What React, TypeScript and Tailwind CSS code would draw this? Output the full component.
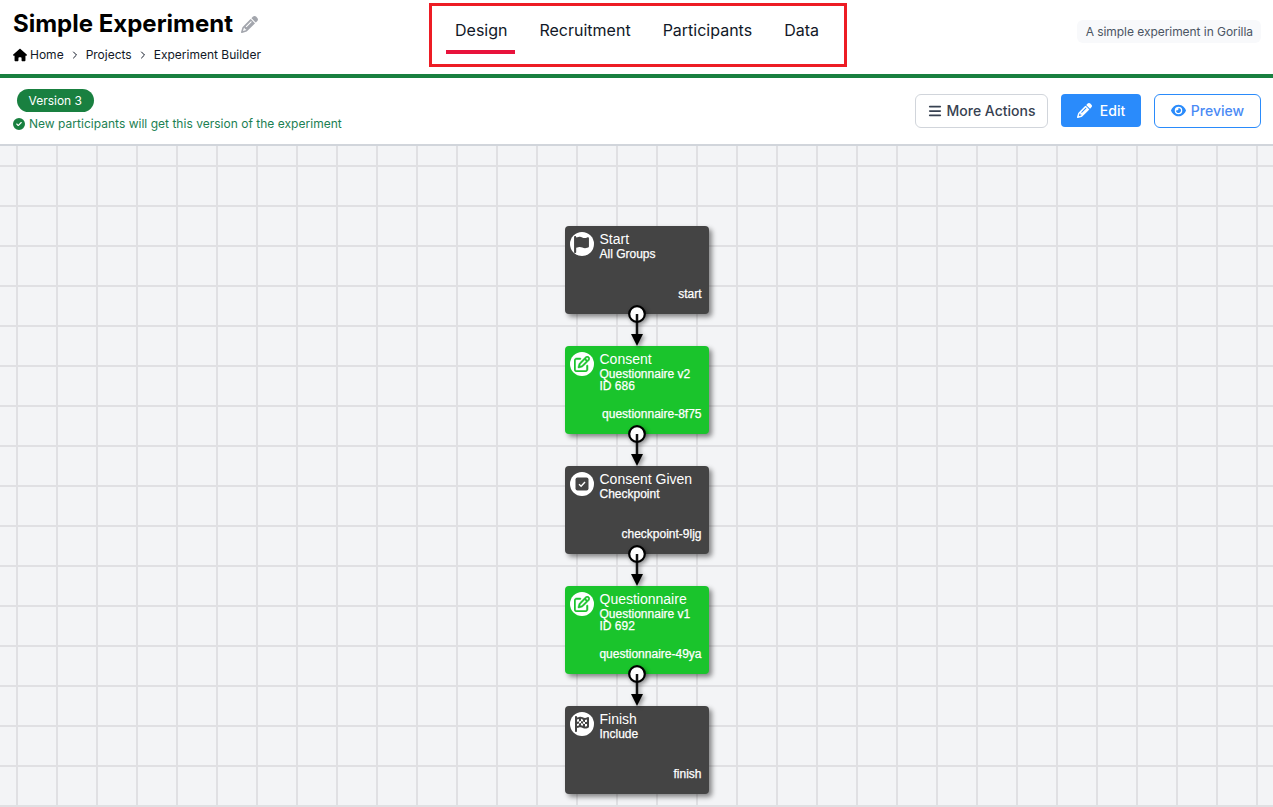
import { ChevronRight } from "lucide-react";
import { FaHouse, FaPencil, FaCircleCheck, FaEye, FaFlag, FaRegPenToSquare, FaFlagCheckered, FaBars } from "react-icons/fa6";

function CheckBox() {
  return (
    <svg width="14" height="14" viewBox="0 0 14 14">
      <rect x="0.5" y="0.5" width="13" height="13" rx="2" fill="#444444" />
      <path d="M4 7.2L6.1 9.2L10 5" fill="none" stroke="#fff" strokeWidth="1.4" />
    </svg>
  );
}

function EditIcon() {
  return <FaRegPenToSquare stroke="currentColor" strokeWidth="16" className="text-[16px]" />;
}

function FlagIcon() {
  return <FaFlag className="text-[17px]" />;
}

function FinishIcon() {
  return <FaFlagCheckered className="text-[16px]" />;
}

const nodes = [
  { title: "Start", lines: ["All Groups"], id: "start", icon: FlagIcon, green: false },
  { title: "Consent", lines: ["Questionnaire v2", "ID 686"], id: "questionnaire-8f75", icon: EditIcon, green: true },
  { title: "Consent Given", lines: ["Checkpoint"], id: "checkpoint-9ljg", icon: CheckBox, green: false },
  { title: "Questionnaire", lines: ["Questionnaire v1", "ID 692"], id: "questionnaire-49ya", icon: EditIcon, green: true },
  { title: "Finish", lines: ["Include"], id: "finish", icon: FinishIcon, green: false, last: true },
];

export default function App() {
  return (
    <div className="h-[807px] w-full overflow-hidden bg-white font-['Inter',sans-serif] text-black flex flex-col">
      <header className="h-[78px] shrink-0 border-b-4 border-[#198040] flex">
        <div className="w-[429px] pl-[13px] pt-[9px]">
          <div className="flex items-center gap-2">
            <h1 className="text-2xl font-bold leading-[30px]">Simple Experiment</h1>
            <FaPencil className="text-[#a3a6ad] text-[17px]" />
          </div>
          <nav className="mt-1 flex items-center text-xs leading-6 text-[#111827]">
            <FaHouse className="mr-[3px] text-[14px] text-black" />
            <span>Home</span>
            <ChevronRight className="mx-[5px] h-3 w-3" />
            <span>Projects</span>
            <ChevronRight className="mx-[5px] h-3 w-3" />
            <span>Experiment Builder</span>
          </nav>
        </div>
        <nav className="mt-[3px] h-[64px] w-[418px] border-[3px] border-[#ed1c24] flex gap-4 pl-[14px] text-base text-[#111827]">
          <Tab label="Design" active />
          <Tab label="Recruitment" />
          <Tab label="Participants" />
          <Tab label="Data" />
        </nav>
        <div className="flex-1 flex justify-end items-start pr-3 pt-5">
          <span className="rounded-md bg-[#f8f9fb] pl-[9px] pr-2 h-[23px] leading-[24px] text-xs tracking-[-0.05px] text-[#4b5563]">
            A simple experiment in Gorilla
          </span>
        </div>
      </header>

      <div className="h-[66px] shrink-0 flex justify-between pl-[13px] pr-3">
        <div className="pt-[11px]">
          <span className="ml-1 block w-fit rounded-full bg-[#198040] px-[11.5px] h-[23px] leading-[23px] text-xs text-white">
            Version 3
          </span>
          <p className="mt-1 flex items-center gap-1 text-xs leading-4 tracking-[0.02px] text-[#1b8052]">
            <FaCircleCheck className="text-[12px] text-[#198040]" />
            New participants will get this version of the experiment
          </p>
        </div>
        <div className="flex items-center gap-[13px] pb-[1px] text-sm font-medium">
          <button className="h-[34px] w-[133px] rounded-md border border-[#d1d5db] text-[#374151] flex items-center justify-center gap-[5px]">
            <FaBars className="text-[14px]" /> More Actions
          </button>
          <button className="h-[33px] w-[80px] rounded-[4px] bg-[#2a8bfb] text-white flex items-center justify-center gap-2">
            <FaPencil className="text-[15px]" /> Edit
          </button>
          <button className="h-[34px] w-[107px] rounded-md border border-[#2a8bfb] text-[#4a8af5] flex items-center justify-center gap-[5px]">
            <FaEye className="text-[15px] text-[#2a8bfb]" /> Preview
          </button>
        </div>
      </div>

      <main className="flex-1 border-t-2 border-[#d1d5db] bg-[#f3f4f6] bg-[linear-gradient(to_right,#e0e0e3_2px,transparent_2px),linear-gradient(to_bottom,#e0e0e3_2px,transparent_2px)] bg-[size:40px_40px] bg-[position:16px_19px] flex flex-col items-center pt-[80px] gap-8">
        {nodes.map((n) => (
          <Node key={n.id} {...n} />
        ))}
      </main>
    </div>
  );
}

function Tab({ label, active }: { label: string; active?: boolean }) {
  return (
    <a className={`pr-2 pt-[12px] h-[48px] leading-6 ${active ? "pl-[9px] border-b-4 border-[#e8133c]" : "pl-2"}`}>{label}</a>
  );
}

function Node({ title, lines, id, icon: Icon, green, last }: { title: string; lines: string[]; id: string; icon: any; green: boolean; last?: boolean }) {
  return (
    <div className={`relative h-[88px] w-[144px] shrink-0 rounded-[4px] text-white font-['Liberation_Sans',sans-serif] shadow-[3px_3px_5px_rgba(0,0,0,0.45)] ${green ? "bg-[#1ac42c]" : "bg-[#444444]"}`}>
      <div className="flex pl-[5px] pt-[5px] gap-[6px]">
        <span className={`mt-[1px] grid h-6 w-6 shrink-0 place-items-center rounded-full bg-white ${green ? "text-[#1ac42c]" : "text-[#444444]"}`}>
          <Icon />
        </span>
        <div>
          <div className="text-sm leading-4">{title}</div>
          <div className="mt-[1px] text-xs leading-3 [-webkit-text-stroke:0.25px_white]">
            {lines.map((l) => (
              <div key={l}>{l}</div>
            ))}
          </div>
        </div>
      </div>
      <div className="absolute bottom-[14px] right-[7px] text-xs leading-3 [-webkit-text-stroke:0.25px_white]">{id}</div>
      {!last && (
        <svg className="absolute left-[63px] top-[79px] z-10 overflow-visible drop-shadow-[2px_2px_2px_rgba(0,0,0,0.4)]" width="18" height="41" viewBox="0 0 18 41">
          <path d="M9 9V30" stroke="#111" strokeWidth="2.5" />
          <path d="M3 29H15L9 41Z" fill="#000" />
          <circle cx="9" cy="9" r="7.8" fill="#fff" stroke="#000" strokeWidth="2.2" />
          <path d="M9 9V16" stroke="#111" strokeWidth="2.5" />
        </svg>
      )}
    </div>
  );
}
